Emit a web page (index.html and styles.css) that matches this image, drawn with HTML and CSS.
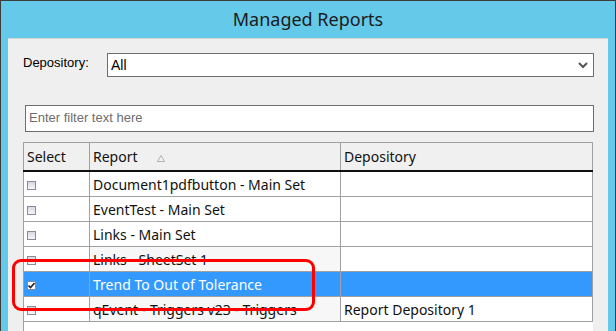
FILE: index.html
```html
<!DOCTYPE html>
<html lang="en">

<head>
    <meta charset="UTF-8">
    <title>Managed Reports</title>
    <link rel="stylesheet" href="styles.css">
</head>

<body>
    <div class="window">
        <div class="title">Managed Reports</div>
        <div class="panel">
            <div class="repo-row">
                <label class="repo-label" for="repo">Depository:</label>
                <div class="select">
                    <span>All</span>
                    <svg class="chevron" width="10" height="7" viewBox="0 0 10 7">
                        <polyline points="1,1 5,5 9,1" fill="none" stroke="#555" stroke-width="2"/>
                    </svg>
                </div>
            </div>

            <div class="filter">Enter filter text here</div>

            <div class="grid">
                <table>
                    <thead>
                        <tr>
                            <th class="col-select">Select</th>
                            <th class="col-report">Report
                                <svg class="sort" width="8" height="7" viewBox="0 0 8 7">
                                    <polygon points="4,0.5 7.5,6.5 0.5,6.5" fill="#f4f4f4" stroke="#b0b0b0" stroke-width="1"/>
                                </svg>
                            </th>
                            <th class="col-repo">Depository</th>
                        </tr>
                    </thead>
                    <tbody>
                        <tr>
                            <td><span class="check"></span></td>
                            <td>Document1pdfbutton - Main Set</td>
                            <td></td>
                        </tr>
                        <tr>
                            <td><span class="check"></span></td>
                            <td>EventTest - Main Set</td>
                            <td></td>
                        </tr>
                        <tr>
                            <td><span class="check"></span></td>
                            <td>Links - Main Set</td>
                            <td></td>
                        </tr>
                        <tr class="alt">
                            <td><span class="check"></span></td>
                            <td>Links - SheetSet 1</td>
                            <td></td>
                        </tr>
                        <tr class="selected">
                            <td><span class="check checked">
                                <svg width="7" height="7" viewBox="0 0 7 7">
                                    <polyline points="0.5,3.5 2.5,5.5 6.5,1" fill="none" stroke="#222" stroke-width="1.6"/>
                                </svg>
                            </span></td>
                            <td>Trend To Out of Tolerance</td>
                            <td></td>
                        </tr>
                        <tr class="alt">
                            <td><span class="check"></span></td>
                            <td>qEvent - Triggers v23 - Triggers</td>
                            <td>Report Depository 1</td>
                        </tr>
                    </tbody>
                </table>
            </div>
        </div>
        <div class="highlight"></div>
    </div>
</body>

</html>
```

FILE: styles.css
```css
body {
    margin: 0;
    overflow: hidden;
}

.window {
    position: relative;
    width: 614px;
    height: 331px;
    background-color: #65c9ea;
    border: 1px solid #3c3c3c;
    border-bottom: none;
    display: flex;
    flex-direction: column;
}

.title {
    height: 37px;
    line-height: 37px;
    text-align: center;
    font-family: "Noto Sans", sans-serif;
    font-size: 18px;
    color: #1b1b1b;
}

.panel {
    flex: 1;
    margin: 0 7px;
    background-color: #efefef;
    border-top: 1px solid #d6d6d6;
    padding: 14px 14px 0 15px;
    font-family: "Liberation Sans", Arial, sans-serif;
    font-size: 13px;
}

.repo-row {
    display: flex;
    align-items: flex-start;
}

.repo-label {
    width: 84px;
    padding-top: 2px;
    color: #000;
}

.select {
    flex: 1;
    height: 22px;
    background: #fff;
    border: 1px solid #6e6e6e;
    display: flex;
    align-items: center;
    justify-content: space-between;
    padding: 0 5px 0 3px;
    font-size: 14px;
}

.chevron {
    margin-top: 1px;
}

.filter {
    margin: 28px 0 0 2px;
    height: 25px;
    line-height: 24px;
    background: #fff;
    border: 1px solid #6e6e6e;
    padding-left: 3px;
    color: #6d6d6d;
}

.grid {
    margin-top: 10px;
    height: 200px;
    background: #fff;
    border-left: 1px solid #a0a0a0;
    width: 569px;
}

table {
    border-collapse: collapse;
    width: 570px;
    margin-left: -1px;
    font-family: "Noto Sans", sans-serif;
    font-size: 14px;
    color: #111;
}

th,
td {
    border: 1px solid #a0a0a0;
    text-align: left;
    padding: 0 0 0 3px;
    white-space: nowrap;
}

th {
    height: 27px;
    font-weight: normal;
    background: #f0f0f0;
    border-bottom: 2px solid #111;
}

td {
    height: 24px;
}

.col-select {
    width: 62px;
}

.col-report {
    width: 247px;
}

.sort {
    margin-left: 16px;
}

tr.alt td:nth-child(2) {
    background: #f7f7f7;
}

tr.selected td {
    background: #3399ff;
    color: #fff;
    border-bottom: 1px dotted #e07a1f;
}

.check {
    display: inline-block;
    width: 7px;
    height: 7px;
    border: 1px solid #8a8a9c;
    background: linear-gradient(#d8d8e2, #f6f6fa);
    vertical-align: 0;
    position: relative;
}

.check.checked {
    background: #fff;
}

.check svg {
    position: absolute;
    left: 0;
    top: 0;
}

.highlight {
    position: absolute;
    left: 11px;
    top: 258px;
    width: 297px;
    height: 46px;
    border: 3px solid #ff0000;
    border-radius: 9px;
}
```
